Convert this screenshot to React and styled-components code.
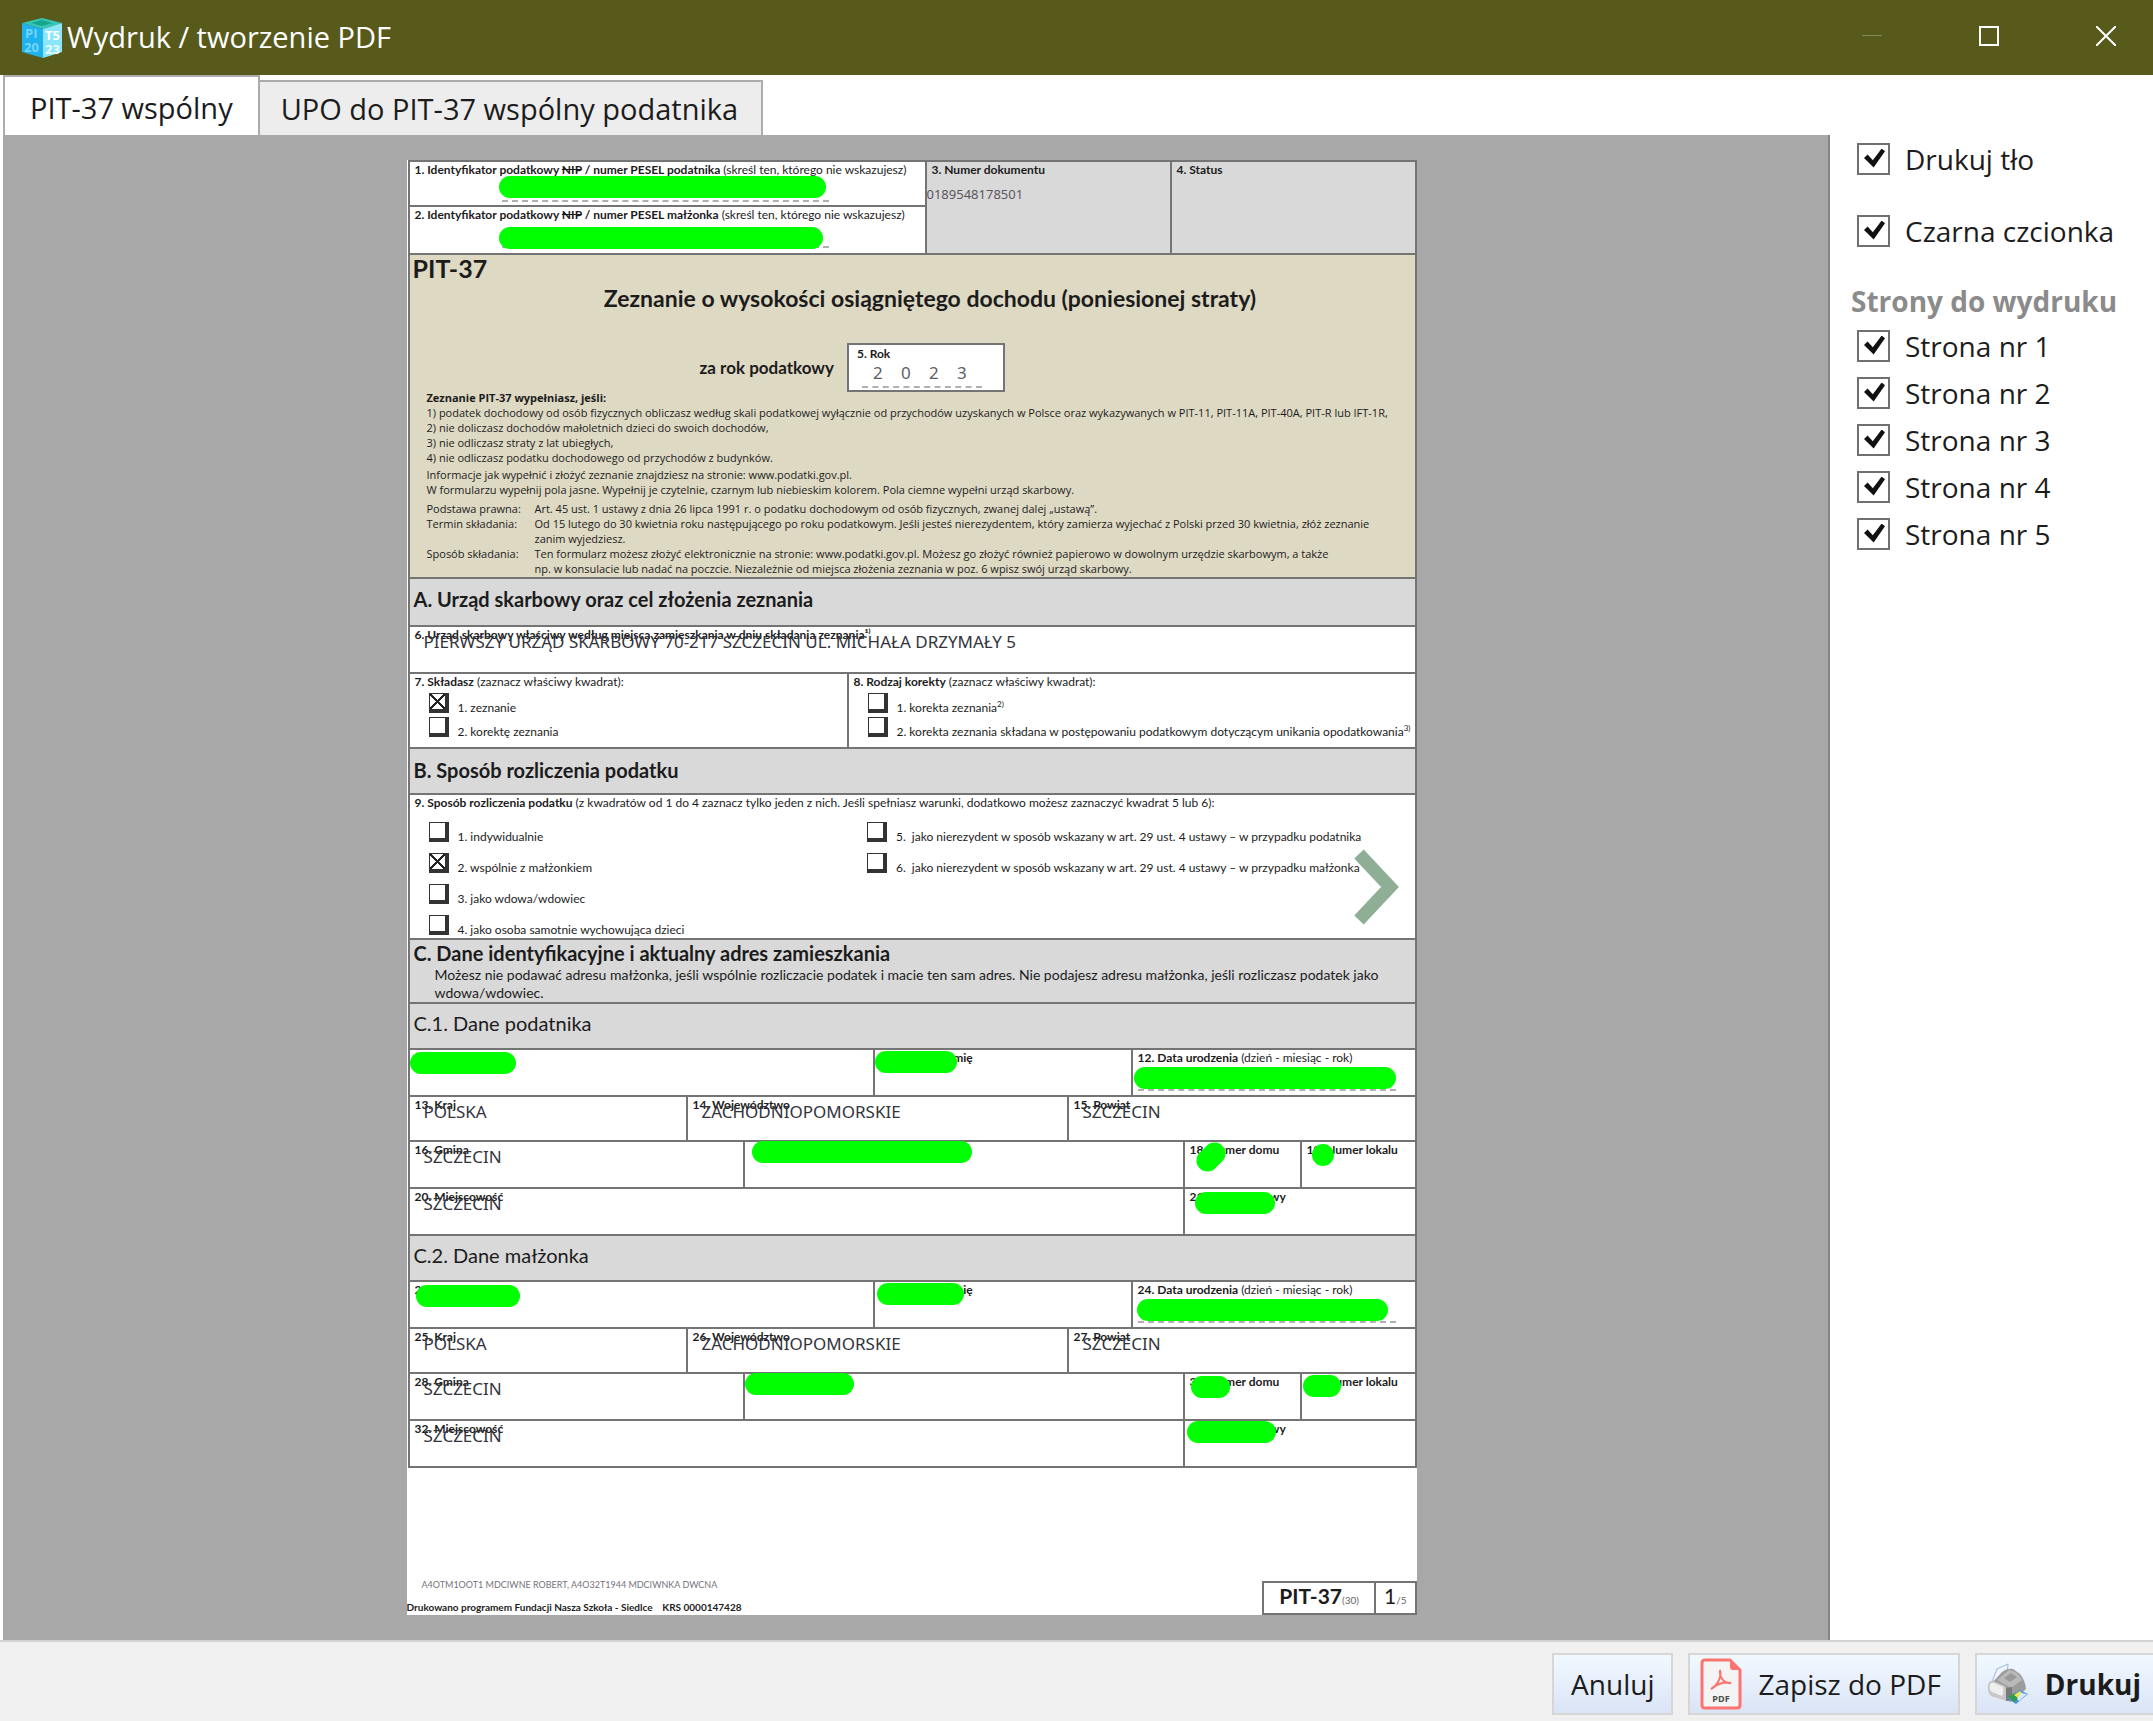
import React from 'react';
import styled, { createGlobalStyle, css } from 'styled-components';

const GlobalStyle = createGlobalStyle`
  * {
    box-sizing: border-box;
  }

  body {
    margin: 0;
    background: #fff;
    color: #1c1c1c;
    font-family: 'Open Sans', 'Noto Sans', sans-serif;
  }

  button,
  input {
    font: inherit;
    color: inherit;
    margin: 0;
  }
`;

const Window = styled.div`
  display: flex;
  flex-direction: column;
  min-height: 100vh;
  overflow: hidden;
`;

/* title bar */

const TitleBar = styled.header`
  display: flex;
  align-items: center;
  height: 75px;
  padding-left: 20px;
  background: #575a1b;
  color: #fff;
`;

const Title = styled.h1`
  flex: 1;
  margin: 0 0 2px 4px;
  font-size: 29px;
  font-weight: 400;
  line-height: 40px;
`;

const WindowButtons = styled.div`
  display: flex;
  gap: 23px;
`;

const WindowButton = styled.button`
  display: flex;
  align-items: center;
  justify-content: center;
  width: 94px;
  height: 75px;
  padding: 0 0 4px;
  border: 0;
  background: none;
  color: ${props => (props.$dim ? '#85875a' : '#fff')};
`;

/* tabs */

const Tabs = styled.div`
  display: flex;
  align-items: flex-end;
  height: 60px;
  padding-left: 3px;
`;

const Tab = styled.button`
  height: ${props => (props.$active ? '60px' : '55px')};
  padding: ${props => (props.$active ? '4px 25px 0' : '0 23px 0 21px')};
  border: 2px solid #acacac;
  border-left-width: ${props => (props.$active ? '2px' : '0')};
  border-bottom: 0;
  background: ${props => (props.$active ? '#fff' : '#ededed')};
  font-size: 29px;
  line-height: 50px;
  white-space: nowrap;
`;

const Main = styled.main`
  display: flex;
  flex: 1;
  padding-left: 3px;
  background: #fff;
`;

const Preview = styled.section`
  display: flex;
  flex: 1;
  justify-content: center;
  padding: 25px 8px 25px 0;
  background: #a8a8a8;
  border-right: 2px solid #858585;
`;

/* sidebar */

const Sidebar = styled.aside`
  width: 323px;
  padding-left: 21px;
  font-size: 28px;
`;

const Options = styled.div`
  display: grid;
  grid-auto-rows: 47px;
  row-gap: ${props => (props.$loose ? '25px' : '0')};
  padding-left: 6px;
`;

const OptionLabel = styled.label`
  display: flex;
  align-items: center;
  gap: 15px;
  white-space: nowrap;
`;

const Tick = styled.input`
  position: relative;
  flex: none;
  width: 33px;
  height: 32px;
  appearance: none;
  border: 2px solid #707070;
  background: #fff;

  &:checked::after {
    content: '';
    position: absolute;
    inset: 4px 3px 5px 5px;
    background: #111;
    clip-path: polygon(0 50%, 17% 32%, 42% 62%, 84% 0, 100% 14%, 46% 100%);
  }
`;

const SidebarTitle = styled.h2`
  margin: 26px 0 0;
  color: #8b8b8b;
  font-size: 28px;
  font-weight: 700;
  line-height: 42px;
  white-space: nowrap;
`;

/* footer */

const Footer = styled.footer`
  display: flex;
  justify-content: flex-end;
  gap: 15px;
  height: 81px;
  padding-top: 11px;
  border-top: 2px solid #d2d2d2;
  background: #f0f0f0;
`;

const Action = styled.button`
  display: flex;
  align-items: center;
  gap: 16px;
  height: 62px;
  padding: ${props => (props.$icon ? '0 17px 0 10px' : '0 17px')};
  border: 2px solid #d6d6d6;
  background: linear-gradient(#f1f9ff, #dbe4f6);
  font-size: 28px;
  font-weight: ${props => (props.$primary ? 700 : 400)};
  white-space: nowrap;

  &:last-child {
    padding-right: 12px;
    border-right: 0;
  }
`;

/* printed form */

const line = '#747474';

const Page = styled.article`
  position: relative;
  display: flex;
  flex-direction: column;
  width: 100%;
  max-width: 1010px;
  background: #fff;
  font-family: Lato, 'Open Sans', sans-serif;
  font-size: 12px;
  line-height: 14px;
`;

const Sheet = styled.div`
  margin: 0 0 0 1px;
  border: solid ${line};
  border-width: 0 2px 2px;
`;

const Row = styled.div`
  display: grid;
  grid-template-columns: ${props => props.$cols || '1fr'};
  min-height: ${props => props.$height}px;
  border-top: 2px solid ${line};
`;

const Cell = styled.div`
  position: relative;
  min-width: 0;
  padding: 1px 0 0 5px;
  background: ${props => (props.$dark ? '#d9d9d9' : '#fff')};
  white-space: nowrap;

  & + & {
    border-left: 2px solid ${line};
  }
`;

const Stack = styled.div`
  display: grid;
  grid-template-rows: 43px 1fr;
  min-width: 0;

  ${Cell} + ${Cell} {
    border-left: 0;
    border-top: 2px solid ${line};
  }

  & + ${Cell} {
    border-left: 2px solid ${line};
  }
`;

const Value = styled.div`
  margin: -9px 0 0 9px;
  color: #33343c;
  font-family: 'Noto Sans', sans-serif;
  font-size: 17px;
  line-height: 18px;
`;

const DocumentNumber = styled.div`
  margin: 9px 0 0 -5px;
  color: #5c5560;
  font-family: 'Noto Sans', sans-serif;
  font-size: 13px;
  line-height: 16px;
`;

/* the comb of small ticks that digits are written on */
const Comb = styled.div`
  width: ${props => props.$width}px;
  margin: ${props => props.$top}px 0 0 ${props => props.$left || 0}px;
  border-top: 2px dashed #b0b0b0;
`;

const Redaction = styled.span`
  position: absolute;
  z-index: 1;
  left: ${props => props.$x}px;
  top: ${props => props.$y}px;
  width: ${props => props.$w}px;
  height: 22px;
  border-radius: 11px;
  background: #0f0;
  ${props =>
    props.$tilted &&
    css`
      transform: rotate(-45deg);
    `}
`;

const Intro = styled.div`
  min-width: 0;
  padding: 0 3px;
  background: #ded9c3;
`;

const FormCode = styled.div`
  font-size: 25px;
  font-weight: 700;
  line-height: 26px;
`;

const FormTitle = styled.h2`
  margin: 2px 0 30px 36px;
  font-size: 23px;
  font-weight: 700;
  line-height: 30px;
  text-align: center;
`;

const YearLine = styled.div`
  display: flex;
  align-items: center;
  gap: 13px;
  margin: 0 0 -2px 287px;
  font-size: 17px;
  font-weight: 700;
`;

const YearBox = styled.div`
  width: 158px;
  height: 49px;
  padding: 2px 8px 0;
  border: 2px solid ${line};
  background: #fff;
  font-size: 12px;
`;

const Digits = styled.div`
  display: flex;
  padding-left: 7px;
  color: #5d6066;
  font-family: 'Noto Sans', sans-serif;
  font-size: 17px;
  font-weight: 400;
  line-height: 24px;

  span {
    width: 28px;
    text-align: center;
  }
`;

const Notes = styled.div`
  padding-left: 14px;
  font-family: 'Open Sans', sans-serif;
  font-size: 11px;
  line-height: 15px;
  white-space: nowrap;

  p {
    margin: 0;
  }
`;

const Info = styled.div`
  margin: 2px 0 4px;
`;

const Terms = styled.dl`
  display: grid;
  grid-template-columns: 108px 1fr;
  margin: 0;

  dd {
    margin: 0;
  }
`;

const SectionHead = styled.div`
  padding: ${props => props.$top}px 4px 0;
  background: #d9d9d9;

  h3 {
    margin: 0;
    font-size: 20px;
    font-weight: ${props => (props.$light ? 400 : 700)};
    line-height: 26px;
  }

  p {
    margin: 0 16px 0 21px;
    font-size: 14px;
    line-height: 18px;
  }
`;

const Choices = styled.div`
  display: grid;
  grid-auto-rows: 24px;
  padding: 4px 0 0 14px;
`;

const WideChoices = styled.div`
  display: grid;
  grid-template: repeat(3, 31px) 23px / 438fr 547fr;
  grid-auto-flow: column;
  padding: 12px 0 0 14px;
`;

const Choice = styled.label`
  display: flex;
  align-items: flex-start;
  gap: 9px;

  span {
    padding-top: 8px;
  }

  sup {
    font-size: 8px;
    line-height: 0;
  }
`;

const FormBox = styled.input`
  width: 20px;
  height: 20px;
  appearance: none;
  border: solid #333;
  border-width: 1px 4px 4px 1px;
  background: #fff;

  &:checked {
    background: linear-gradient(
        45deg,
        transparent 46%,
        #222 46%,
        #222 54%,
        transparent 54%
      ),
      linear-gradient(
        -45deg,
        transparent 46%,
        #222 46%,
        #222 54%,
        transparent 54%
      ),
      #fff;
  }
`;

const NextPage = styled.button`
  position: absolute;
  z-index: 2;
  top: 688px;
  right: 16px;
  padding: 0;
  border: 0;
  background: none;
  line-height: 0;
`;

const PageFoot = styled.div`
  display: flex;
  justify-content: space-between;
  align-items: flex-end;
  margin-top: auto;
`;

const Owners = styled.div`
  padding-left: 15px;
  margin-bottom: 8px;
  color: #76727c;
  font-size: 9px;
`;

const Imprint = styled.div`
  margin-bottom: 1px;
  font-size: 10px;
  font-weight: 700;
  white-space: pre;
`;

const PageTag = styled.div`
  display: flex;
  height: 34px;
  border: 2px solid ${line};
  font-size: 21px;
  line-height: 26px;

  small {
    font-size: 10px;
    color: #666;
  }

  strong {
    padding: 0 15px;
  }

  span {
    padding: 0 8px;
    border-left: 2px solid ${line};
  }

  strong small {
    font-weight: 400;
  }
`;

const AppIcon = () => (
  <svg width="43" height="42" viewBox="0 0 43 42" aria-hidden="true">
    <path d="M2 6 L22 1 L42 6 L23 12 Z" fill="#35c6b4" />
    <path d="M11 6 L22 3 L32 6 L22 9 Z" fill="#15a58c" />
    <path d="M2 6 L23 12 V41 L2 35 Z" fill="#1fb2ec" />
    <path d="M23 12 L42 6 V35 L23 41 Z" fill="#8ce6fb" />
    <g fontFamily="Open Sans, sans-serif" fontSize="13" fontWeight="700">
      <text x="5" y="21" fill="#74d6f8">PI</text>
      <text x="4" y="35" fill="#74d6f8">20</text>
      <text x="25" y="23" fill="#fff">T5</text>
      <text x="25" y="37" fill="#e9fdff">23</text>
    </g>
  </svg>
);

const PdfIcon = () => (
  <svg width="42" height="52" viewBox="0 0 42 52" aria-hidden="true">
    <path
      d="M5 2 H30 L40 12 V47 Q40 50 37 50 H5 Q2 50 2 47 V5 Q2 2 5 2 Z"
      fill="#f5f4f4"
      stroke="#fb7470"
      strokeWidth="3"
    />
    <path d="M30 2 V9 Q30 12 33 12 H40 Z" fill="#fb7470" />
    <path
      d="M11 31 C17 28 22 19 20 12 C19 20 25 26 31 25 C24 23 15 27 11 31 Z"
      fill="none"
      stroke="#fb7470"
      strokeWidth="2"
    />
    <text
      x="21"
      y="44"
      textAnchor="middle"
      fontSize="9"
      fontWeight="700"
      fontFamily="Open Sans, sans-serif"
      fill="#4a4a4a"
    >
      PDF
    </text>
  </svg>
);

const PrinterIcon = () => (
  <svg width="42" height="42" viewBox="0 0 42 42" aria-hidden="true">
    <path d="M5 19 L10 6 L21 1 L20 13 Z" fill="#eef5fe" stroke="#9fb6da" />
    <path
      d="M5 20 L15 9 Q20 5 26 6 L33 11 Q38 17 39 26 L24 39 L3 31 Z"
      fill="#9c9c9c"
    />
    <path d="M10 17 L22 7 Q31 8 35 17 L24 25 Z" fill="#b9b9b9" />
    <path d="M17 15 L24 10 L30 14 L23 19 Z" fill="#9a9a9a" />
    <path
      d="M1 22 Q2 17 6 18 L18 23 Q20 25 19 38 L4 33 Q0 30 1 22 Z"
      fill="#c9c9c9"
    />
    <path d="M3 22 Q4 19 7 20 L16 24 Q17 30 15 33 L5 29 Q2 27 3 22 Z" fill="#efefef" />
    <path d="M19 25 L25 24 L25 37 L19 38 Z" fill="#7a7a7a" />
    <path d="M20 35 L33 27 L41 31 L29 41 Z" fill="#4f93df" />
    <path d="M21 34 L28 30 L32 36 L27 39 Z" fill="#2f9b54" />
    <path d="M27 32 L33 28 L36 31 L31 35 Z" fill="#f2e34a" />
    <path d="M34 30 L40 31 L32 38 L30 36 Z" fill="#d4e9fd" />
  </svg>
);

const Option = ({ children }) => (
  <OptionLabel>
    <Tick type="checkbox" defaultChecked />
    {children}
  </OptionLabel>
);

const Box = ({ checked, children }) => (
  <Choice>
    <FormBox type="checkbox" defaultChecked={checked} />
    <span>{children}</span>
  </Choice>
);

const Field = ({ label, hint, value, children }) => (
  <Cell>
    <b>{label}</b> {hint}
    {value && <Value>{value}</Value>}
    {children}
  </Cell>
);

const Mark = ({ at: [x, y, w], tilted }) => (
  <Redaction $x={x} $y={y} $w={w} $tilted={tilted} />
);

const people = [
  {
    head: 'C.1. Dane podatnika',
    first: 10,
    marks: {
      surname: [0, 2, 106],
      name: [0, 1, 82],
      birth: [1, 17, 262],
      street: [7, -1, 220],
      house: [10, 4, 32],
      flat: [10, 2, 22],
      code: [10, 3, 80]
    },
    tilted: true
  },
  {
    head: 'C.2. Dane małżonka',
    first: 22,
    marks: {
      surname: [6, 3, 104],
      name: [2, 1, 87],
      birth: [4, 17, 251],
      street: [0, -1, 109],
      house: [6, 2, 39],
      flat: [1, 1, 38],
      code: [2, 0, 89]
    }
  }
];

const Person = ({ head, first: n, marks, tilted }) => (
  <>
    <Row $height={46}>
      <SectionHead $light $top={6}>
        <h3>{head}</h3>
      </SectionHead>
    </Row>
    <Row $height={47} $cols="463fr 258fr 284fr">
      <Field label={`${n}. Nazwisko`}>
        <Mark at={marks.surname} />
      </Field>
      <Field label={`${n + 1}. Pierwsze imię`}>
        <Mark at={marks.name} />
      </Field>
      <Field label={`${n + 2}. Data urodzenia`} hint="(dzień - miesiąc - rok)">
        <Comb $width={258} $top={24} />
        <Mark at={marks.birth} />
      </Field>
    </Row>
    <Row $height={45} $cols="276fr 381fr 348fr">
      <Field label={`${n + 3}. Kraj`} value="POLSKA" />
      <Field label={`${n + 4}. Województwo`} value="ZACHODNIOPOMORSKIE" />
      <Field label={`${n + 5}. Powiat`} value="SZCZECIN" />
    </Row>
    <Row $height={47} $cols="333fr 440fr 117fr 115fr">
      <Field label={`${n + 6}. Gmina`} value="SZCZECIN" />
      <Cell>
        <Mark at={marks.street} />
      </Cell>
      <Field label={`${n + 8}. Numer domu`}>
        <Mark at={marks.house} tilted={tilted} />
      </Field>
      <Field label={`${n + 9}. Numer lokalu`}>
        <Mark at={marks.flat} />
      </Field>
    </Row>
    <Row $height={47} $cols="773fr 232fr">
      <Field label={`${n + 10}. Miejscowość`} value="SZCZECIN" />
      <Field label={`${n + 11}. Kod pocztowy`}>
        <Mark at={marks.code} />
      </Field>
    </Row>
  </>
);

const Form = () => (
  <Page>
    <Sheet>
      <Row $height={93} $cols="515fr 245fr 245fr">
        <Stack>
          <Cell>
            <b>
              1. Identyfikator podatkowy <s>NIP</s> / numer PESEL podatnika
            </b>{' '}
            (skreśl ten, którego nie wskazujesz)
            <Comb $width={327} $top={23} $left={87} />
            <Mark at={[89, 14, 327]} />
          </Cell>
          <Cell>
            <b>
              2. Identyfikator podatkowy <s>NIP</s> / numer PESEL małżonka
            </b>{' '}
            (skreśl ten, którego nie wskazujesz)
            <Comb $width={327} $top={24} $left={87} />
            <Mark at={[89, 20, 324]} />
          </Cell>
        </Stack>
        <Cell $dark>
          <b>3. Numer dokumentu</b>
          <DocumentNumber>0189548178501</DocumentNumber>
        </Cell>
        <Cell $dark>
          <b>4. Status</b>
        </Cell>
      </Row>
      <Row $height={324}>
        <Intro>
          <FormCode>PIT-37</FormCode>
          <FormTitle>
            Zeznanie o wysokości osiągniętego dochodu (poniesionej straty)
          </FormTitle>
          <YearLine>
            za rok podatkowy
            <YearBox>
              5. Rok
              <Digits>
                <span>2</span>
                <span>0</span>
                <span>2</span>
                <span>3</span>
              </Digits>
              <Comb $width={120} $top={1} $left={5} />
            </YearBox>
          </YearLine>
          <Notes>
            <p>
              <b>Zeznanie PIT-37 wypełniasz, jeśli:</b>
            </p>
            <p>
              1) podatek dochodowy od osób fizycznych obliczasz według skali
              podatkowej wyłącznie od przychodów uzyskanych w Polsce oraz
              wykazywanych w PIT-11, PIT-11A, PIT-40A, PIT-R lub IFT-1R,
            </p>
            <p>
              2) nie doliczasz dochodów małoletnich dzieci do swoich dochodów,
            </p>
            <p>3) nie odliczasz straty z lat ubiegłych,</p>
            <p>
              4) nie odliczasz podatku dochodowego od przychodów z budynków.
            </p>
            <Info>
              <p>
                Informacje jak wypełnić i złożyć zeznanie znajdziesz na stronie:
                www.podatki.gov.pl.
              </p>
              <p>
                W formularzu wypełnij pola jasne. Wypełnij je czytelnie, czarnym
                lub niebieskim kolorem. Pola ciemne wypełni urząd skarbowy.
              </p>
            </Info>
            <Terms>
              <dt>Podstawa prawna:</dt>
              <dd>
                Art. 45 ust. 1 ustawy z dnia 26 lipca 1991 r. o podatku
                dochodowym od osób fizycznych, zwanej dalej „ustawą”.
              </dd>
              <dt>Termin składania:</dt>
              <dd>
                Od 15 lutego do 30 kwietnia roku następującego po roku
                podatkowym. Jeśli jesteś nierezydentem, który zamierza wyjechać
                z Polski przed 30 kwietnia, złóż zeznanie
                <br />
                zanim wyjedziesz.
              </dd>
              <dt>Sposób składania:</dt>
              <dd>
                Ten formularz możesz złożyć elektronicznie na stronie:
                www.podatki.gov.pl. Możesz go złożyć również papierowo w
                dowolnym urzędzie skarbowym, a także
                <br />
                np. w konsulacie lub nadać na poczcie. Niezależnie od miejsca
                złożenia zeznania w poz. 6 wpisz swój urząd skarbowy.
              </dd>
            </Terms>
          </Notes>
        </Intro>
      </Row>
      <Row $height={48}>
        <SectionHead $top={7}>
          <h3>A. Urząd skarbowy oraz cel złożenia zeznania</h3>
        </SectionHead>
      </Row>
      <Row $height={47}>
        <Field
          label="6. Urząd skarbowy właściwy według miejsca zamieszkania w dniu składania zeznania¹⁾"
          value="PIERWSZY URZĄD SKARBOWY 70-217 SZCZECIN UL. MICHAŁA DRZYMAŁY 5"
        />
      </Row>
      <Row $height={75} $cols="437fr 568fr">
        <Field label="7. Składasz" hint="(zaznacz właściwy kwadrat):">
          <Choices>
            <Box checked>1. zeznanie</Box>
            <Box>2. korektę zeznania</Box>
          </Choices>
        </Field>
        <Field label="8. Rodzaj korekty" hint="(zaznacz właściwy kwadrat):">
          <Choices>
            <Box>
              1. korekta zeznania<sup>2)</sup>
            </Box>
            <Box>
              2. korekta zeznania składana w postępowaniu podatkowym dotyczącym
              unikania opodatkowania<sup>3)</sup>
            </Box>
          </Choices>
        </Field>
      </Row>
      <Row $height={46}>
        <SectionHead $top={8}>
          <h3>B. Sposób rozliczenia podatku</h3>
        </SectionHead>
      </Row>
      <Row $height={145}>
        <Field
          label="9. Sposób rozliczenia podatku"
          hint="(z kwadratów od 1 do 4 zaznacz tylko jeden z nich. Jeśli spełniasz warunki, dodatkowo możesz zaznaczyć kwadrat 5 lub 6):"
        >
          <WideChoices>
            <Box>1. indywidualnie</Box>
            <Box checked>2. wspólnie z małżonkiem</Box>
            <Box>3. jako wdowa/wdowiec</Box>
            <Box>4. jako osoba samotnie wychowująca dzieci</Box>
            <Box>
              5.&nbsp; jako nierezydent w sposób wskazany w art. 29 ust. 4
              ustawy – w przypadku podatnika
            </Box>
            <Box>
              6.&nbsp; jako nierezydent w sposób wskazany w art. 29 ust. 4
              ustawy – w przypadku małżonka
            </Box>
          </WideChoices>
        </Field>
      </Row>
      <Row $height={64}>
        <SectionHead $top={0}>
          <h3>C. Dane identyfikacyjne i aktualny adres zamieszkania</h3>
          <p>
            Możesz nie podawać adresu małżonka, jeśli wspólnie rozliczacie
            podatek i macie ten sam adres. Nie podajesz adresu małżonka, jeśli
            rozliczasz podatek jako wdowa/wdowiec.
          </p>
        </SectionHead>
      </Row>
      {people.map(person => (
        <Person key={person.head} {...person} />
      ))}
    </Sheet>
    <NextPage aria-label="Następna strona">
      <svg width="48" height="78" viewBox="0 0 48 78">
        <path
          d="M6 6 L37 39 L6 72"
          fill="none"
          stroke="#8fae96"
          strokeWidth="13"
        />
      </svg>
    </NextPage>
    <PageFoot>
      <div>
        <Owners>
          A4OTM1OOT1 MDCIWNE ROBERT, A4O32T1944 MDCIWNKA DWCNA
        </Owners>
        <Imprint>
          {
            'Drukowano programem Fundacji Nasza Szkoła - Siedlce    KRS 0000147428'
          }
        </Imprint>
      </div>
      <PageTag>
        <strong>
          PIT-37<small>(30)</small>
        </strong>
        <span>
          1<small>/5</small>
        </span>
      </PageTag>
    </PageFoot>
  </Page>
);

const App = () => (
  <>
    <GlobalStyle />
    <Window>
      <TitleBar>
        <AppIcon />
        <Title>Wydruk / tworzenie PDF</Title>
        <WindowButtons>
          <WindowButton $dim aria-label="Minimalizuj">
            <svg width="20" height="20">
              <path d="M0 9 H20 V10 H0 Z" fill="currentColor" />
            </svg>
          </WindowButton>
          <WindowButton aria-label="Maksymalizuj">
            <svg width="20" height="20">
              <path
                d="M1 1 H19 V19 H1 Z"
                fill="none"
                stroke="currentColor"
                strokeWidth="2"
              />
            </svg>
          </WindowButton>
          <WindowButton aria-label="Zamknij">
            <svg width="20" height="20">
              <path
                d="M0 0 L20 20 M20 0 L0 20"
                stroke="currentColor"
                strokeWidth="2"
              />
            </svg>
          </WindowButton>
        </WindowButtons>
      </TitleBar>
      <Tabs role="tablist">
        <Tab role="tab" aria-selected="true" $active>
          PIT-37 wspólny
        </Tab>
        <Tab role="tab" aria-selected="false">
          UPO do PIT-37 wspólny podatnika
        </Tab>
      </Tabs>
      <Main>
        <Preview>
          <Form />
        </Preview>
        <Sidebar>
          <Options $loose>
            <Option>Drukuj tło</Option>
            <Option>Czarna czcionka</Option>
          </Options>
          <SidebarTitle>Strony do wydruku</SidebarTitle>
          <Options>
            {[1, 2, 3, 4, 5].map(n => (
              <Option key={n}>Strona nr {n}</Option>
            ))}
          </Options>
        </Sidebar>
      </Main>
      <Footer>
        <Action>Anuluj</Action>
        <Action $icon>
          <PdfIcon />
          Zapisz do PDF
        </Action>
        <Action $icon $primary>
          <PrinterIcon />
          Drukuj
        </Action>
      </Footer>
    </Window>
  </>
);

export default App;
